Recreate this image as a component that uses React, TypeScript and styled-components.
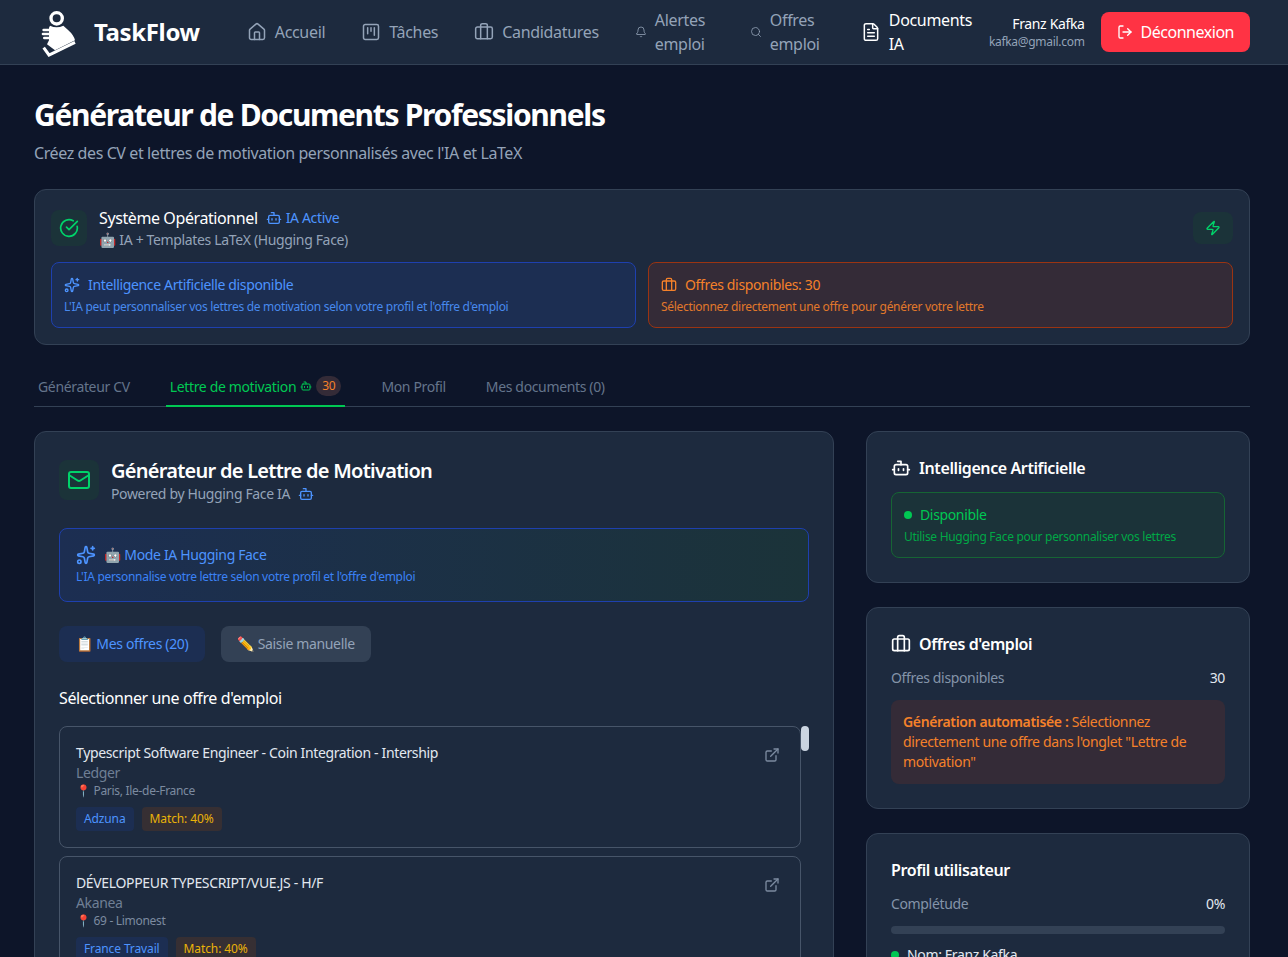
import React from 'react'
import styled, { createGlobalStyle } from 'styled-components'
import {
    Bell, Bot, Briefcase, CircleCheckBig, ExternalLink, FileText, House,
    LogOut, Mail, Search, Sparkles, SquareKanban, Zap,
} from 'lucide-react'

const GlobalStyle = createGlobalStyle`
    * {
        box-sizing: border-box;
        letter-spacing: -0.025em;
    }
    html, body {
        margin: 0;
        height: 957px;
        overflow: hidden;
        background: #0d1529;
        font-family: "Noto Sans", "Noto Color Emoji", sans-serif;
        color: #fff;
    }
`

const Logo = () => (
    <svg width="50" height="55" viewBox="0 0 150 165" fill="none">
        <circle cx="65" cy="40" r="17" stroke="#fff" strokeWidth="10" />
        <path d="M45 62 Q65 72 85 62 L100 76 Q116 90 120 106 L60 136 L36 118 L42 106 L42 68 Z" fill="#fff" />
        <path d="M26 75 H50 M24 87 H50 M28 99 H50" stroke="#fff" strokeWidth="8" strokeLinecap="round" />
        <path d="M26 128 L42 150 L120 112" stroke="#fff" strokeWidth="9" />
    </svg>
)

const nav = [
    { label: 'Accueil', icon: House, size: 20 },
    { label: 'Tâches', icon: SquareKanban, size: 20 },
    { label: 'Candidatures', icon: Briefcase, size: 20 },
    { label: 'Alertes emploi', icon: Bell, size: 12, width: 59 },
    { label: 'Offres emploi', icon: Search, size: 12, width: 55 },
    { label: 'Documents IA', icon: FileText, size: 20, width: 82, active: true },
]

const jobs = [
    { title: 'Typescript Software Engineer - Coin Integration - Intership', company: 'Ledger', place: 'Paris, Ile-de-France', source: 'Adzuna' },
    { title: 'DÉVELOPPEUR TYPESCRIPT/VUE.JS - H/F', company: 'Akanea', place: '69 - Limonest', source: 'France Travail' },
]

export default function App(): JSX.Element {
    return (
        <>
            <GlobalStyle />
            <NavBar>
                <Brand>
                    <Logo />
                    <BrandName>TaskFlow</BrandName>
                </Brand>
                <NavList>
                    {nav.map((item) => (
                        <NavItem key={item.label} $active={item.active}>
                            <item.icon size={item.size} strokeWidth={item.size < 14 ? 1.6 : 1.8} />
                            <NavLabel $width={item.width}>{item.label}</NavLabel>
                        </NavItem>
                    ))}
                </NavList>
                <UserBox>
                    <UserName>Franz Kafka</UserName>
                    <UserMail>kafka@gmail.com</UserMail>
                </UserBox>
                <LogoutButton>
                    <LogOut size={16} />
                    Déconnexion
                </LogoutButton>
            </NavBar>

            <Page>
                <Title>Générateur de Documents Professionnels</Title>
                <Subtitle>Créez des CV et lettres de motivation personnalisés avec l'IA et LaTeX</Subtitle>

                <StatusCard>
                    <StatusHead>
                        <IconBox $size={36}><CircleCheckBig size={20} /></IconBox>
                        <StatusText>
                            <StatusTitle>
                                Système Opérationnel
                                <ActiveTag><Bot size={16} /> IA Active</ActiveTag>
                            </StatusTitle>
                            <StatusSub>🤖 IA + Templates LaTeX (Hugging Face)</StatusSub>
                        </StatusText>
                        <ZapBox><Zap size={16} /></ZapBox>
                    </StatusHead>
                    <AlertGrid>
                        <Alert $tone="blue">
                            <AlertTitle><Sparkles size={16} /> Intelligence Artificielle disponible</AlertTitle>
                            <AlertText>L'IA peut personnaliser vos lettres de motivation selon votre profil et l'offre d'emploi</AlertText>
                        </Alert>
                        <Alert $tone="orange">
                            <AlertTitle><Briefcase size={16} /> Offres disponibles: 30</AlertTitle>
                            <AlertText>Sélectionnez directement une offre pour générer votre lettre</AlertText>
                        </Alert>
                    </AlertGrid>
                </StatusCard>

                <Tabs>
                    <Tab>Générateur CV</Tab>
                    <Tab $active>
                        Lettre de motivation
                        <Bot size={12} />
                        <TabBadge>30</TabBadge>
                    </Tab>
                    <Tab>Mon Profil</Tab>
                    <Tab>Mes documents (0)</Tab>
                </Tabs>

                <Columns>
                    <Panel>
                        <PanelHead>
                            <IconBox $size={40}><Mail size={24} /></IconBox>
                            <div>
                                <PanelTitle>Générateur de Lettre de Motivation</PanelTitle>
                                <PanelSub>Powered by Hugging Face IA <Bot size={16} /></PanelSub>
                            </div>
                        </PanelHead>

                        <ModeBox>
                            <ModeTitle><Sparkles size={20} /> 🤖 Mode IA Hugging Face</ModeTitle>
                            <ModeText>L'IA personnalise votre lettre selon votre profil et l'offre d'emploi</ModeText>
                        </ModeBox>

                        <ModeButtons>
                            <ModeButton $active>📋 Mes offres (20)</ModeButton>
                            <ModeButton>✏️ Saisie manuelle</ModeButton>
                        </ModeButtons>

                        <ListLabel>Sélectionner une offre d'emploi</ListLabel>
                        <JobList>
                            <ScrollThumb />
                            {jobs.map((job) => (
                                <JobCard key={job.title}>
                                    <div>
                                        <JobTitle>{job.title}</JobTitle>
                                        <JobCompany>{job.company}</JobCompany>
                                        <JobPlace>📍 {job.place}</JobPlace>
                                        <Chips>
                                            <Chip $tone="blue">{job.source}</Chip>
                                            <Chip $tone="yellow">Match: 40%</Chip>
                                        </Chips>
                                    </div>
                                    <OpenLink><ExternalLink size={16} /></OpenLink>
                                </JobCard>
                            ))}
                        </JobList>
                    </Panel>

                    <Sidebar>
                        <SideCard>
                            <SideTitle><Bot size={20} /> Intelligence Artificielle</SideTitle>
                            <GreenBox>
                                <GreenTitle><Dot /> Disponible</GreenTitle>
                                <GreenText>Utilise Hugging Face pour personnaliser vos lettres</GreenText>
                            </GreenBox>
                        </SideCard>
                        <SideCard>
                            <SideTitle><Briefcase size={20} /> Offres d'emploi</SideTitle>
                            <StatRow><span>Offres disponibles</span><b>30</b></StatRow>
                            <Notice>
                                <strong>Génération automatisée : </strong>
                                Sélectionnez directement une offre dans l'onglet "Lettre de motivation"
                            </Notice>
                        </SideCard>
                        <SideCard>
                            <SideTitle>Profil utilisateur</SideTitle>
                            <StatRow><span>Complétude</span><b>0%</b></StatRow>
                            <Progress />
                            <ProfileItem><Dot /> Nom: Franz Kafka</ProfileItem>
                        </SideCard>
                    </Sidebar>
                </Columns>
            </Page>
        </>
    )
}

const NavBar = styled.header`
    display: flex;
    align-items: center;
    height: 65px;
    padding: 0 38px 0 35px;
    background: #1d2a3e;
    border-bottom: 1px solid #334155;
`

const Brand = styled.div`
    display: flex;
    align-items: center;
    gap: 9px;
    margin-right: 47px;
`

const BrandName = styled.span`
    padding-bottom: 2px;
    font-size: 24px;
    font-weight: 700;
    letter-spacing: -0.015em;
`

const NavList = styled.nav`
    display: flex;
    align-items: center;
    gap: 36px;
`

const NavItem = styled.a<{ $active?: boolean }>`
    display: flex;
    align-items: center;
    gap: 8px;
    font-size: 16px;
    line-height: 24px;
    color: ${(p) => (p.$active ? '#fff' : '#94a3b8')};
`

const NavLabel = styled.span<{ $width?: number }>`
    width: ${(p) => (p.$width ? `${p.$width}px` : 'auto')};
    letter-spacing: -0.02em;
`

const UserBox = styled.div`
    margin-left: auto;
    margin-right: 16px;
    text-align: right;
`

const UserName = styled.div`
    font-size: 14px;
    line-height: 20px;
`

const UserMail = styled.div`
    font-size: 12px;
    line-height: 16px;
    color: #94a3b8;
`

const LogoutButton = styled.button`
    display: flex;
    align-items: center;
    gap: 8px;
    height: 40px;
    padding: 0 16px;
    border: none;
    border-radius: 8px;
    background: #ff3344;
    color: #fff;
    font: inherit;
    font-size: 16px;
    letter-spacing: -0.03em;
`

const Page = styled.main`
    padding: 32px 38px 0 34px;
`

const Title = styled.h1`
    margin: 0;
    font-size: 30px;
    line-height: 36px;
    font-weight: 700;
    letter-spacing: -0.044em;
`

const Subtitle = styled.p`
    margin: 8px 0 24px;
    font-size: 16px;
    line-height: 24px;
    color: #94a3b8;
`

const StatusCard = styled.section`
    padding: 16px;
    background: #1d2a3e;
    border: 1px solid #334155;
    border-radius: 12px;
`

const StatusHead = styled.div`
    display: flex;
    align-items: center;
    gap: 12px;
`

const IconBox = styled.div<{ $size: number }>`
    flex: none;
    display: flex;
    align-items: center;
    justify-content: center;
    width: ${(p) => p.$size}px;
    height: ${(p) => p.$size}px;
    border-radius: 8px;
    background: #1b3339;
    color: #00d36a;
`

const StatusText = styled.div`
    flex: 1;
`

const StatusTitle = styled.div`
    display: flex;
    align-items: center;
    gap: 8px;
    font-size: 16px;
    line-height: 24px;
`

const ActiveTag = styled.span`
    display: inline-flex;
    align-items: center;
    gap: 4px;
    font-size: 14px;
    color: #4d94ff;
`

const StatusSub = styled.div`
    font-size: 14px;
    line-height: 20px;
    color: #94a3b8;
`

const ZapBox = styled.div`
    display: flex;
    align-items: center;
    justify-content: center;
    width: 40px;
    height: 32px;
    border-radius: 8px;
    background: #1b3339;
    color: #00d36a;
`

const AlertGrid = styled.div`
    display: grid;
    grid-template-columns: 1fr 1fr;
    gap: 12px;
    margin-top: 12px;
`

const Alert = styled.div<{ $tone: 'blue' | 'orange' }>`
    padding: 12px;
    border-radius: 8px;
    border: 1px solid ${(p) => (p.$tone === 'blue' ? '#1e40af' : '#9a3412')};
    background: ${(p) => (p.$tone === 'blue' ? '#1c2e52' : '#342b37')};
    color: ${(p) => (p.$tone === 'blue' ? '#4d94ff' : '#f5812a')};
`

const AlertTitle = styled.div`
    display: flex;
    align-items: center;
    gap: 8px;
    font-size: 14px;
    line-height: 20px;
`

const AlertText = styled.div`
    margin-top: 4px;
    font-size: 12px;
    line-height: 16px;
    opacity: 0.9;
`

const Tabs = styled.div`
    display: flex;
    gap: 32px;
    margin-top: 24px;
    height: 38px;
    border-bottom: 1px solid #334155;
`

const Tab = styled.div<{ $active?: boolean }>`
    display: flex;
    align-items: center;
    gap: 4px;
    height: 38px;
    padding: 0 4px 2px;
    font-size: 14px;
    color: ${(p) => (p.$active ? '#00c853' : '#64748b')};
    border-bottom: 2px solid ${(p) => (p.$active ? '#00c853' : 'transparent')};
`

const TabBadge = styled.span`
    padding: 0 6px;
    height: 20px;
    line-height: 20px;
    border-radius: 10px;
    font-size: 12px;
    background: #342b37;
    color: #f5812a;
`

const Columns = styled.div`
    display: grid;
    grid-template-columns: 800px 384px;
    gap: 32px;
    margin-top: 24px;
    align-items: start;
`

const Panel = styled.section`
    padding: 24px;
    background: #1d2a3e;
    border: 1px solid #334155;
    border-radius: 12px;
`

const PanelHead = styled.div`
    display: flex;
    align-items: center;
    gap: 12px;
`

const PanelTitle = styled.h2`
    margin: 0;
    padding-top: 1px;
    font-size: 20px;
    line-height: 27px;
    font-weight: 600;
    letter-spacing: -0.037em;
`

const PanelSub = styled.div`
    display: flex;
    align-items: center;
    gap: 8px;
    font-size: 14px;
    line-height: 20px;
    color: #94a3b8;
    svg { color: #4d94ff; }
`

const ModeBox = styled.div`
    margin-top: 24px;
    padding: 16px;
    border: 1px solid #1e40af;
    border-radius: 8px;
    background: linear-gradient(90deg, #1c2e52, #1b3339);
`

const ModeTitle = styled.div`
    display: flex;
    align-items: center;
    gap: 8px;
    font-size: 14px;
    line-height: 20px;
    color: #4d94ff;
`

const ModeText = styled.div`
    margin-top: 4px;
    font-size: 12px;
    line-height: 16px;
    color: #3b82f6;
`

const ModeButtons = styled.div`
    display: flex;
    gap: 16px;
    margin-top: 24px;
`

const ModeButton = styled.button<{ $active?: boolean }>`
    height: 36px;
    padding: 0 ${(p) => (p.$active ? 17 : 16)}px 2px;
    border: none;
    border-radius: 8px;
    font: inherit;
    font-size: 14px;
    letter-spacing: -0.025em;
    background: ${(p) => (p.$active ? '#1c2e52' : '#334155')};
    color: ${(p) => (p.$active ? '#4d94ff' : '#94a3b8')};
`

const ListLabel = styled.div`
    margin-top: 24px;
    font-size: 16px;
    line-height: 24px;
`

const JobList = styled.div`
    position: relative;
    display: flex;
    flex-direction: column;
    gap: 8px;
    margin-top: 16px;
    padding-right: 8px;
`

const ScrollThumb = styled.div`
    position: absolute;
    top: 0;
    right: 0;
    width: 8px;
    height: 25px;
    border-radius: 4px;
    background: #cbd5e1;
`

const JobCard = styled.article`
    display: flex;
    justify-content: space-between;
    align-items: flex-start;
    padding: 16px;
    border: 1px solid #475569;
    border-radius: 8px;
`

const JobTitle = styled.div`
    font-size: 14px;
    line-height: 20px;
    color: #e2e8f0;
`

const JobCompany = styled.div`
    font-size: 14px;
    line-height: 20px;
    color: #6f7f95;
`

const JobPlace = styled.div`
    font-size: 12px;
    line-height: 16px;
    color: #7c8ba0;
`

const Chips = styled.div`
    display: flex;
    gap: 8px;
    margin-top: 8px;
`

const Chip = styled.span<{ $tone: 'blue' | 'yellow' }>`
    padding: 0 8px;
    height: 24px;
    line-height: 24px;
    border-radius: 4px;
    font-size: 12px;
    letter-spacing: -0.01em;
    background: ${(p) => (p.$tone === 'blue' ? '#1c2e52' : '#362f33')};
    color: ${(p) => (p.$tone === 'blue' ? '#4d94ff' : '#eab308')};
`

const OpenLink = styled.a`
    display: flex;
    padding: 4px;
    color: #7c8ba0;
`

const Sidebar = styled.aside`
    display: flex;
    flex-direction: column;
    gap: 24px;
`

const SideCard = styled.section`
    padding: 24px;
    background: #1d2a3e;
    border: 1px solid #334155;
    border-radius: 12px;
`

const SideTitle = styled.h3`
    display: flex;
    align-items: center;
    gap: 8px;
    margin: 0 0 12px;
    font-size: 16px;
    line-height: 24px;
    font-weight: 600;
`

const GreenBox = styled.div`
    padding: 12px;
    border: 1px solid #166534;
    border-radius: 8px;
    background: #1b3339;
`

const GreenTitle = styled.div`
    display: flex;
    align-items: center;
    gap: 8px;
    font-size: 14px;
    line-height: 20px;
    color: #00c853;
`

const GreenText = styled.div`
    margin-top: 4px;
    font-size: 12px;
    line-height: 16px;
    color: #00a846;
`

const Dot = styled.span`
    flex: none;
    width: 8px;
    height: 8px;
    border-radius: 50%;
    background: #00c853;
`

const StatRow = styled.div`
    display: flex;
    justify-content: space-between;
    font-size: 14px;
    line-height: 20px;
    color: #8494a9;
    b { font-weight: 400; color: #e2e8f0; }
`

const Notice = styled.div`
    margin-top: 12px;
    padding: 12px;
    border-radius: 8px;
    font-size: 14px;
    line-height: 20px;
    background: #342b37;
    color: #f5812a;
    strong { font-weight: 600; }
`

const Progress = styled.div`
    margin-top: 12px;
    height: 8px;
    border-radius: 4px;
    background: #334155;
`

const ProfileItem = styled.div`
    display: flex;
    align-items: center;
    gap: 8px;
    margin-top: 11px;
    font-size: 14px;
    line-height: 20px;
    color: #e2e8f0;
`
